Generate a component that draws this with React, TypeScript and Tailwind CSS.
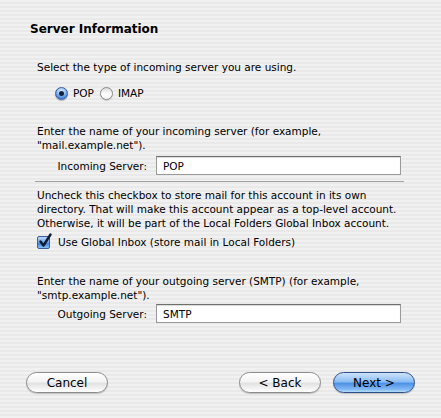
import React from 'react';

const font = "font-['DejaVu_Sans',sans-serif]";

function Radio({ checked }: { checked: boolean }) {
    return checked ? (
        <span className="flex h-[13px] w-[13px] shrink-0 items-center justify-center rounded-full border border-[#3b5f9a] bg-[radial-gradient(circle_at_50%_30%,#e6f1ff_0%,#8fbaf0_45%,#3d7fd9_75%,#78b1f2_100%)] shadow-[0_1px_1px_rgba(0,0,0,0.25)]">
            <span className="h-[5px] w-[5px] rounded-full bg-[#10213d]" />
        </span>
    ) : (
        <span className="block h-[13px] w-[13px] shrink-0 rounded-full border border-[#8a8a8a] bg-[linear-gradient(180deg,#d9d9d9_0%,#ffffff_55%,#f2f2f2_100%)] shadow-[0_1px_1px_rgba(0,0,0,0.15)]" />
    );
}

function Checkbox() {
    return (
        <span className="relative flex h-[13px] w-[13px] shrink-0 items-center justify-center rounded-[2px] border border-[#3b5f9a] bg-[linear-gradient(180deg,#bcd8fb_0%,#6aa3ea_50%,#3f84dc_60%,#8cc0f5_100%)]">
            <svg width="14" height="15" viewBox="0 0 14 15" className="absolute -top-[4px] left-[0px]">
                <path d="M2.5 8.5 L5.5 12.5 L12.5 1.5" fill="none" stroke="#0f1c33" strokeWidth="2.4" strokeLinecap="round" strokeLinejoin="round" />
            </svg>
        </span>
    );
}

function Field({ label, value }: { label: string; value: string }) {
    return (
        <div className="flex h-[19px] items-center">
            <span className="w-[111px] pr-[1px] text-right">{label}</span>
            <div className="ml-[8px] flex h-[19px] w-[245px] items-center border border-[#9a9a9a] border-t-[#6f6f6f] bg-white pl-[6px] shadow-[inset_0_1px_1px_rgba(0,0,0,0.15)]">
                {value}
            </div>
        </div>
    );
}

function AquaButton({ label, primary, className }: { label: string; primary?: boolean; className?: string }) {
    const look = primary
        ? 'border-[#2c4f8c] bg-[linear-gradient(180deg,#cfe3fb_0%,#8dbdf3_45%,#4f93e6_55%,#7fb8f4_85%,#b4dcfb_100%)]'
        : 'border-[#8b8b8b] bg-[linear-gradient(180deg,#ffffff_0%,#f4f4f4_45%,#e2e2e2_55%,#f6f6f6_85%,#ffffff_100%)]';
    return (
        <button
            className={`flex h-[21px] w-[82px] items-center justify-center rounded-full border text-[12px] text-black shadow-[0_1px_1px_rgba(0,0,0,0.2)] ${look} ${className ?? ''}`}
        >
            {label}
        </button>
    );
}

export default function App() {
    return (
        <div
            className={`${font} flex h-[418px] w-[441px] flex-col bg-[repeating-linear-gradient(180deg,#f1f1f1_0px,#f1f1f1_2px,#e9e9e9_2px,#e9e9e9_4px)] text-[10.5px] leading-[14px] text-black`}
        >
            <h1 className="ml-[30px] mt-[21px] text-[12px] font-bold leading-[16px]">Server Information</h1>

            <div className="ml-[37px] flex flex-col">
                <p className="mt-[23px]">Select the type of incoming server you are using.</p>

                <div className="ml-[18px] mt-[12px] flex h-[14px] items-center">
                    <Radio checked />
                    <span className="ml-[5px]">POP</span>
                    <div className="ml-[6px] flex">
                        <Radio checked={false} />
                    </div>
                    <span className="ml-[5px]">IMAP</span>
                </div>

                <p className="mt-[24px]">
                    Enter the name of your incoming server (for example,
                    <br />
                    "mail.example.net").
                </p>

                <div className="mt-[4px]">
                    <Field label="Incoming Server:" value="POP" />
                </div>

                <div className="-ml-[2px] mt-[6px] h-[2px] w-[369px] border-t border-[#a3a3a3] border-b-white" />

                <p className="mt-[5px]">
                    Uncheck this checkbox to store mail for this account in its own
                    <br />
                    directory. That will make this account appear as a top-level account.
                    <br />
                    Otherwise, it will be part of the Local Folders Global Inbox account.
                </p>

                <div className="mt-[5px] flex h-[14px] items-center">
                    <Checkbox />
                    <span className="ml-[8px]">Use Global Inbox (store mail in Local Folders)</span>
                </div>

                <p className="mt-[25px]">
                    Enter the name of your outgoing server (SMTP) (for example,
                    <br />
                    "smtp.example.net").
                </p>

                <div className="mt-[2px]">
                    <Field label="Outgoing Server:" value="SMTP" />
                </div>
            </div>

            <div className="mt-[49px] flex">
                <AquaButton label="Cancel" className="ml-[26px]" />
                <AquaButton label="< Back" className="ml-[131px]" />
                <AquaButton label="Next >" primary className="ml-[12px]" />
            </div>
        </div>
    );
}
